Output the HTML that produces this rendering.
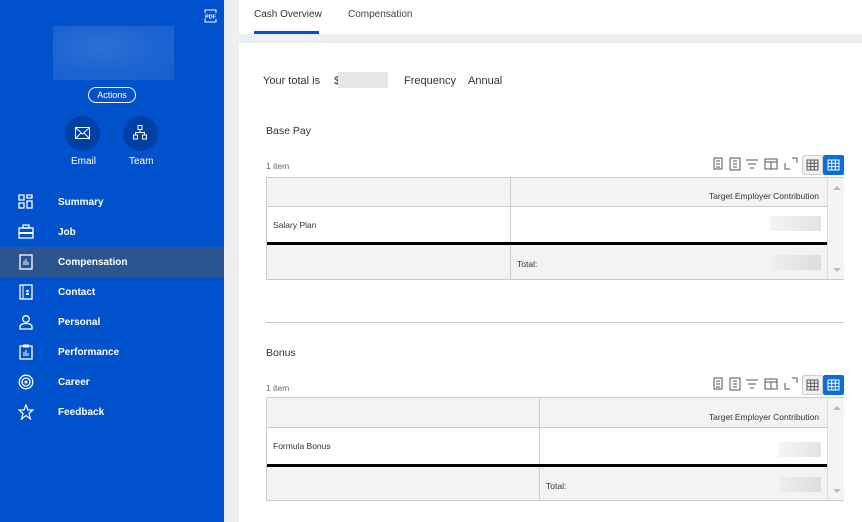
<!DOCTYPE html><html><head><style>
*{box-sizing:border-box;margin:0;padding:0}
body{width:862px;height:522px;overflow:hidden;font-family:"Liberation Sans",sans-serif;background:#eeeff1;position:relative;color:#333}
.sb{position:absolute;left:0;top:0;width:224px;height:522px;background:#0052cc;color:#fff}
.abs{position:absolute}
.nav{position:absolute;left:0;width:224px;height:30px;font-size:10px;font-weight:bold;line-height:30px}
.nav span{position:absolute;left:58px;top:0.5px}
.nav svg{position:absolute;left:18px;top:7px}
.main{position:absolute;left:239px;top:0;width:623px;height:522px}
.tabs{position:absolute;left:0;top:0;width:623px;height:34px;background:#fff;font-size:10px}
.panel{position:absolute;left:0;top:43px;width:623px;height:479px;background:#fff}
.t{position:absolute;font-size:11px;color:#333}
.tbl{position:absolute;left:27px;width:578px;border:1px solid #ccc;font-size:8.5px;color:#333}
.tbl div{position:absolute}
</style></head><body>
<div class="sb">
<svg class="abs" style="left:204px;top:9px" width="13" height="14"><rect x="1" y="1" width="11" height="12" fill="none" stroke="#fff"/><rect x="0" y="4" width="13" height="6" fill="#0052cc"/><text x="6.5" y="9.5" font-size="5.5" fill="#fff" text-anchor="middle" font-family="Liberation Sans" font-weight="bold">PDF</text></svg>
<div class="abs" style="left:53px;top:26px;width:121px;height:54px;background:radial-gradient(ellipse at 40% 40%,#2e6fd4,#1c62d0 60%,#1a5fd0)"></div>
<div class="abs" style="left:88px;top:87px;width:48px;height:16px;border:1px solid #fff;border-radius:8px;font-size:9px;text-align:center;line-height:14px">Actions</div>
<div class="abs" style="left:65px;top:116px;width:35px;height:35px;border-radius:50%;background:#003fa3"></div>
<div class="abs" style="left:123px;top:116px;width:35px;height:35px;border-radius:50%;background:#003fa3"></div>
<svg class="abs" style="left:75px;top:127px" width="15" height="12"><rect x="0.5" y="0.5" width="14" height="11" fill="none" stroke="#fff"/><path d="M1 1L7.5 7L14 1M1 11L6 6M14 11L9 6" stroke="#fff" fill="none"/></svg>
<svg class="abs" style="left:133px;top:125px" width="14" height="15"><rect x="5" y="0.5" width="4" height="4" fill="none" stroke="#fff"/><rect x="0.5" y="10" width="4" height="4" fill="none" stroke="#fff"/><rect x="9.5" y="10" width="4" height="4" fill="none" stroke="#fff"/><path d="M7 4.5V7.5M2.5 10V7.5H11.5V10" stroke="#fff" fill="none"/></svg>
<div class="abs" style="left:71px;top:156px;font-size:10px">Email</div>
<div class="abs" style="left:129px;top:156px;font-size:10px">Team</div>
<div class="nav" style="top:187px"><svg width="16" height="16"><rect x="1" y="1" width="5" height="5" fill="none" stroke="#fff" stroke-width="1.3"/><rect x="9" y="1" width="5" height="3" fill="none" stroke="#fff" stroke-width="1.3"/><rect x="1" y="9" width="5" height="5" fill="none" stroke="#fff" stroke-width="1.3"/><rect x="9" y="7" width="5" height="7" fill="none" stroke="#fff" stroke-width="1.3"/></svg><span>Summary</span></div>
<div class="nav" style="top:217px"><svg width="16" height="16"><rect x="1" y="4" width="14" height="10" fill="none" stroke="#fff" stroke-width="1.3"/><rect x="5" y="1" width="6" height="3" fill="none" stroke="#fff" stroke-width="1.3"/><path d="M1 9H15" stroke="#fff" stroke-width="2"/></svg><span>Job</span></div>
<div class="nav" style="top:247px;background:#2c5491"><svg width="16" height="16"><rect x="2" y="1" width="12" height="14" fill="none" stroke="#fff" stroke-width="1.3"/><path d="M6 11V7M8 11V5M10 11V8" stroke="#fff"/></svg><span>Compensation</span></div>
<div class="nav" style="top:277px"><svg width="16" height="16"><rect x="2" y="1" width="12" height="14" fill="none" stroke="#fff" stroke-width="1.3"/><path d="M5 1V15" stroke="#fff"/><circle cx="9.5" cy="7" r="1.3" fill="#fff"/><rect x="8" y="9" width="3" height="2" fill="#fff"/></svg><span>Contact</span></div>
<div class="nav" style="top:307px"><svg width="16" height="16"><circle cx="8" cy="5" r="3.3" fill="none" stroke="#fff" stroke-width="1.3"/><path d="M2 15V13C2 10 5 9.5 8 9.5S14 10 14 13V15Z" fill="none" stroke="#fff" stroke-width="1.3"/></svg><span>Personal</span></div>
<div class="nav" style="top:337px"><svg width="16" height="16"><rect x="2" y="2" width="12" height="13" fill="none" stroke="#fff" stroke-width="1.3"/><rect x="5" y="0.5" width="6" height="3" fill="#fff"/><path d="M6 12V8M8 12V6M10 12V9" stroke="#fff"/></svg><span>Performance</span></div>
<div class="nav" style="top:367px"><svg width="16" height="16"><circle cx="8" cy="8" r="6.8" fill="none" stroke="#fff" stroke-width="1.3"/><circle cx="8" cy="8" r="4" fill="none" stroke="#fff" stroke-width="1.3"/><circle cx="8" cy="8" r="1.5" fill="#fff"/></svg><span>Career</span></div>
<div class="nav" style="top:397px"><svg width="16" height="16"><path d="M8 1L10 6H15L11 9.5L12.5 15L8 11.5L3.5 15L5 9.5L1 6H6Z" fill="none" stroke="#fff" stroke-width="1.2"/></svg><span>Feedback</span></div>
</div>
<div class="main">
<div class="tabs"><div class="abs" style="left:15px;top:9px;color:#333">Cash Overview</div><div class="abs" style="left:15px;top:31px;width:65px;height:3px;background:#0052cc"></div><div class="abs" style="left:109px;top:9px;color:#444">Compensation</div></div>
<div class="panel">
<div class="t" style="left:24px;top:32px">Your total is</div>
<div class="t" style="left:95px;top:32px">$</div>
<div class="abs" style="left:99px;top:29px;width:50px;height:16px;background:#e6e6e6"></div>
<div class="t" style="left:165px;top:32px">Frequency</div>
<div class="t" style="left:229px;top:32px">Annual</div>
<div class="t" style="left:27px;top:82px;font-size:10.5px">Base Pay</div>
<div class="t" style="left:27px;top:118px;font-size:8.5px;color:#666">1 item</div>
<div class="t" style="left:27px;top:304px;font-size:10.5px">Bonus</div>
<div class="t" style="left:27px;top:340px;font-size:8.5px;color:#666">1 item</div>
<div class="abs" style="left:27px;top:279px;width:578px;height:1px;background:#ccc"></div>
</div>
</div>
<svg class="abs" style="left:708px;top:155px" width="136" height="20">
<g fill="none" stroke="#555"><rect x="6" y="3" width="8" height="11"/><path d="M8 6h4M8 9h4M8 12h4"/><rect x="22" y="3" width="10" height="12"/><path d="M25 6h4M25 9h4M25 12h4"/><path d="M38 5h12M40 9h8M42 13h4"/><rect x="57" y="4" width="12" height="10"/><path d="M57 7h12M63 7v7"/><path d="M77 8v6h5M84 3h5v5"/></g>
<rect x="94.5" y="0.5" width="20" height="19" fill="#eef2f7" stroke="#ccc" rx="2"/><rect x="115" y="0" width="21" height="20" fill="#0a6fd6" rx="2"/>
<g fill="none" stroke="#555"><rect x="99" y="5" width="11" height="10"/><path d="M99 8.3h11M99 11.6h11M102.7 5v10M106.3 5v10"/></g>
<g fill="none" stroke="#fff"><rect x="120" y="5" width="11" height="10"/><path d="M120 8.3h11M120 11.6h11M123.7 5v10M127.3 5v10"/></g>
</svg>
<svg class="abs" style="left:708px;top:375px" width="136" height="20">
<g fill="none" stroke="#555"><rect x="6" y="3" width="8" height="11"/><path d="M8 6h4M8 9h4M8 12h4"/><rect x="22" y="3" width="10" height="12"/><path d="M25 6h4M25 9h4M25 12h4"/><path d="M38 5h12M40 9h8M42 13h4"/><rect x="57" y="4" width="12" height="10"/><path d="M57 7h12M63 7v7"/><path d="M77 8v6h5M84 3h5v5"/></g>
<rect x="94.5" y="0.5" width="20" height="19" fill="#eef2f7" stroke="#ccc" rx="2"/><rect x="115" y="0" width="21" height="20" fill="#0a6fd6" rx="2"/>
<g fill="none" stroke="#555"><rect x="99" y="5" width="11" height="10"/><path d="M99 8.3h11M99 11.6h11M102.7 5v10M106.3 5v10"/></g>
<g fill="none" stroke="#fff"><rect x="120" y="5" width="11" height="10"/><path d="M120 8.3h11M120 11.6h11M123.7 5v10M127.3 5v10"/></g>
</svg>
<div class="tbl" style="left:266px;top:177px;height:103px">
<div style="left:0;top:0;width:560px;height:29px;background:#f2f3f5;border-bottom:1px solid #ccc"></div>
<div style="left:560px;top:0;width:17px;height:101px;background:#f4f4f4;border-left:1px solid #ddd"></div>
<div style="left:566px;top:8px;width:0;height:0;border:4px solid transparent;border-bottom-color:#bbb;border-top:0"></div>
<div style="left:566px;top:90px;width:0;height:0;border:4px solid transparent;border-top-color:#bbb;border-bottom:0"></div>
<div style="left:243px;top:0;width:1px;height:101px;background:#ccc"></div>
<div style="left:244px;top:13px;width:308px;text-align:right">Target Employer Contribution</div>
<div style="left:6px;top:42px">Salary Plan</div>
<div style="left:503px;top:38px;width:51px;height:15px;background:linear-gradient(90deg,#f4f4f4,#e4e4e4)"></div>
<div style="left:0;top:64px;width:560px;height:3px;background:#000"></div>
<div style="left:0;top:67px;width:560px;height:34px;background:#f2f3f5"></div>
<div style="left:243px;top:67px;width:1px;height:34px;background:#ccc"></div>
<div style="left:250px;top:81px">Total:</div>
<div style="left:505px;top:77px;width:49px;height:15px;background:linear-gradient(90deg,#eee,#ddd)"></div>
</div>
<div class="tbl" style="left:266px;top:397px;height:104px">
<div style="left:0;top:0;width:560px;height:30px;background:#f2f3f5;border-bottom:1px solid #ccc"></div>
<div style="left:560px;top:0;width:17px;height:102px;background:#f4f4f4;border-left:1px solid #ddd"></div>
<div style="left:566px;top:8px;width:0;height:0;border:4px solid transparent;border-bottom-color:#bbb;border-top:0"></div>
<div style="left:566px;top:91px;width:0;height:0;border:4px solid transparent;border-top-color:#bbb;border-bottom:0"></div>
<div style="left:272px;top:0;width:1px;height:102px;background:#ccc"></div>
<div style="left:273px;top:14px;width:279px;text-align:right">Target Employer Contribution</div>
<div style="left:6px;top:43px">Formula Bonus</div>
<div style="left:512px;top:44px;width:42px;height:15px;background:linear-gradient(90deg,#f4f4f4,#e4e4e4)"></div>
<div style="left:0;top:66px;width:560px;height:3px;background:#000"></div>
<div style="left:0;top:69px;width:560px;height:33px;background:#f2f3f5"></div>
<div style="left:272px;top:69px;width:1px;height:33px;background:#ccc"></div>
<div style="left:279px;top:83px">Total:</div>
<div style="left:512px;top:79px;width:42px;height:15px;background:linear-gradient(90deg,#eee,#ddd)"></div>
</div>
</body></html>
